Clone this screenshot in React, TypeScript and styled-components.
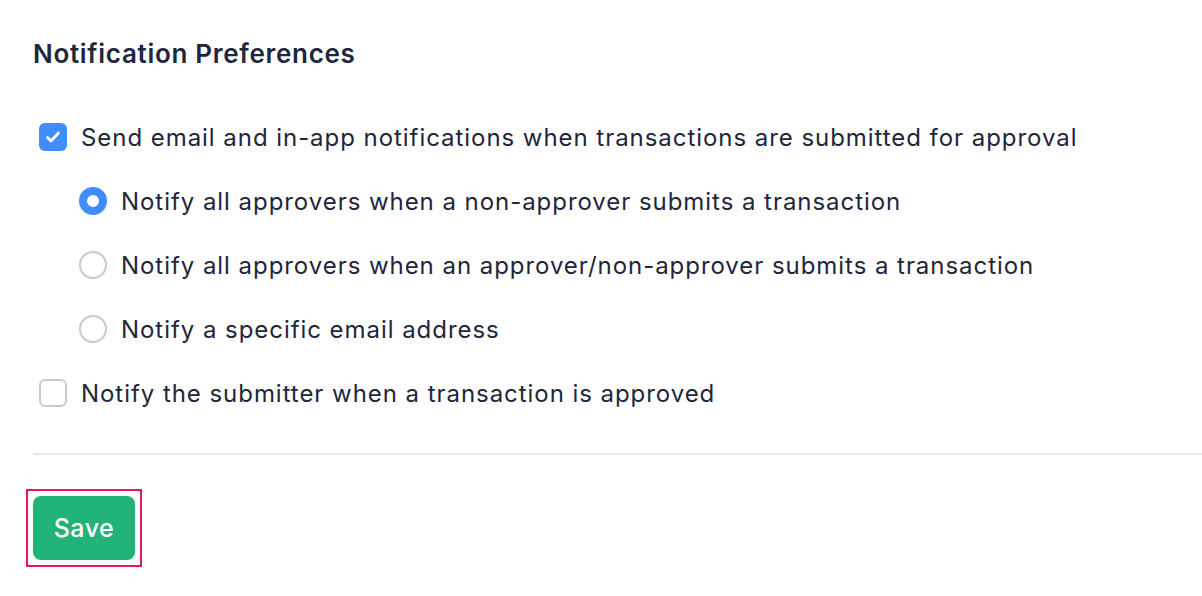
import * as React from 'react';
import styled, { createGlobalStyle } from 'styled-components';

const GlobalStyle = createGlobalStyle`
  body {
    margin: 0;
    background: #ffffff;
    font-family: Inter, "Noto Sans", sans-serif;
    color: #21263c;
  }
`;

const Page = styled.div`
  padding: 36px 0 0 33px;
`;

const Title = styled.h2`
  margin: 0;
  font-size: 26px;
  line-height: 36px;
  letter-spacing: 0.7px;
  font-weight: 600;
  color: #21263c;
`;

const OptionList = styled.div`
  margin-top: 33px;
  display: flex;
  flex-direction: column;
`;

const Row = styled.label<{ $indent?: boolean }>`
  display: flex;
  align-items: center;
  gap: 14px;
  height: 64px;
  padding-left: ${(p) => (p.$indent ? '46px' : '6px')};
  font-size: 24px;
  letter-spacing: 0.95px;
  cursor: pointer;
`;

const Box = styled.span<{ $checked?: boolean }>`
  flex: 0 0 28px;
  width: 28px;
  height: 28px;
  box-sizing: border-box;
  border-radius: 6px;
  display: flex;
  align-items: center;
  justify-content: center;
  background: ${(p) => (p.$checked ? '#408dfb' : '#ffffff')};
  border: ${(p) => (p.$checked ? 'none' : '2px solid #c9c9d0')};
`;

const Radio = styled.span<{ $checked?: boolean }>`
  flex: 0 0 28px;
  width: 28px;
  height: 28px;
  box-sizing: border-box;
  border-radius: 50%;
  background: #ffffff;
  border: ${(p) => (p.$checked ? '8px solid #408dfb' : '2px solid #c9c9d0')};
`;

const Divider = styled.hr`
  margin: 28px 0 0;
  border: 0;
  border-top: 2px solid #e6e6e8;
`;

const FocusFrame = styled.div`
  display: inline-block;
  margin: 34px 0 0 -7px;
  padding: 5px;
  border: 2px solid #e8185a;
`;

const SaveButton = styled.button`
  display: block;
  width: 102px;
  height: 64px;
  border: 0;
  border-radius: 8px;
  background: #22b378;
  color: #ffffff;
  font-family: Inter, "Noto Sans", sans-serif;
  font-size: 25px;
  letter-spacing: 0.5px;
  font-weight: 500;
  cursor: pointer;
  &:focus {
    outline: none;
  }
`;

function Check() {
  return (
    <svg width="18" height="18" viewBox="0 0 18 18" fill="none">
      <path d="M3.5 9.5l3.5 3.5 7.5-8" stroke="#fff" strokeWidth="2.8" strokeLinecap="round" strokeLinejoin="round" />
    </svg>
  );
}

export default function App() {
  const [notifySubmit, setNotifySubmit] = React.useState(true);
  const [mode, setMode] = React.useState(0);
  const [notifyApproved, setNotifyApproved] = React.useState(false);

  const modes = [
    'Notify all approvers when a non-approver submits a transaction',
    'Notify all approvers when an approver/non-approver submits a transaction',
    'Notify a specific email address',
  ];

  return (
    <>
      <GlobalStyle />
      <Page>
        <Title>Notification Preferences</Title>
        <OptionList>
          <Row onClick={() => setNotifySubmit(!notifySubmit)}>
            <Box $checked={notifySubmit}>{notifySubmit && <Check />}</Box>
            Send email and in-app notifications when transactions are submitted for approval
          </Row>
          {modes.map((m, i) => (
            <Row key={m} $indent onClick={() => setMode(i)}>
              <Radio $checked={mode === i} />
              {m}
            </Row>
          ))}
          <Row onClick={() => setNotifyApproved(!notifyApproved)}>
            <Box $checked={notifyApproved}>{notifyApproved && <Check />}</Box>
            Notify the submitter when a transaction is approved
          </Row>
        </OptionList>
        <Divider />
        <FocusFrame>
          <SaveButton>Save</SaveButton>
        </FocusFrame>
      </Page>
    </>
  );
}
